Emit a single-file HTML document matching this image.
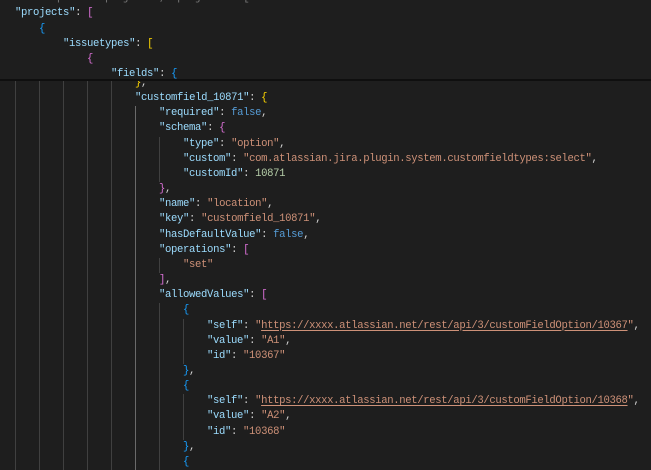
<!DOCTYPE html>
<html><head><meta charset="utf-8"><style>
html,body{margin:0;padding:0;background:#1e1e1e;width:651px;height:454px;overflow:hidden}
.ed{position:absolute;left:0;width:651px;font-family:"Liberation Mono",monospace;font-size:10.6px;letter-spacing:-0.35px;color:#d4d4d4}
.l{position:relative;height:15.17px;line-height:15.17px;white-space:pre}
.k{color:#9cdcfe}.s{color:#ce9178}.b{color:#569cd6}.n{color:#b5cea8}
.y{color:#ffd700}.p{color:#da70d6}.c{color:#179fff}
.u{text-decoration:underline;text-decoration-color:#ce9178;text-underline-offset:2px}
.g{position:absolute;top:0;width:1px;height:15.17px;background:#404040}
.ga{background:#6a6a6a}
#hdr{top:0;height:79px;background:#1e1e1e;z-index:2;overflow:hidden}
#sep{position:absolute;top:79px;left:0;width:651px;height:2px;background:#0f0f0f;z-index:3}
#body{top:76px;z-index:1}
</style></head><body>
<div class="ed" id="hdr"><div style="position:absolute;top:-8.8px;left:0;width:651px"><div class="l" style="padding-left:15px;color:#777">    "expand": "projects", "projects": [ ...</div><div class="l" style="padding-left:15px"><span class="k">"projects"</span>: <span class="p">[</span></div><div class="l" style="padding-left:39px"><span class="c">{</span></div><div class="l" style="padding-left:63px"><span class="k">"issuetypes"</span>: <span class="y">[</span></div><div class="l" style="padding-left:87px"><span class="p">{</span></div><div class="l" style="padding-left:111px"><span class="k">"fields"</span>: <span class="c">{</span></div></div></div>
<div id="sep"></div>
<div class="ed" id="body">
<div class="l" style="padding-left:135px"><i class="g" style="left:15px"></i><i class="g" style="left:39px"></i><i class="g" style="left:63px"></i><i class="g" style="left:87px"></i><i class="g" style="left:111px"></i><span class="y">}</span>,</div>
<div class="l" style="padding-left:135px"><i class="g" style="left:15px"></i><i class="g" style="left:39px"></i><i class="g" style="left:63px"></i><i class="g" style="left:87px"></i><i class="g" style="left:111px"></i><span class="k">"customfield_10871"</span>: <span class="y">{</span></div>
<div class="l" style="padding-left:159px"><i class="g" style="left:15px"></i><i class="g" style="left:39px"></i><i class="g" style="left:63px"></i><i class="g" style="left:87px"></i><i class="g" style="left:111px"></i><i class="g ga" style="left:135px"></i><span class="k">"required"</span>: <span class="b">false</span>,</div>
<div class="l" style="padding-left:159px"><i class="g" style="left:15px"></i><i class="g" style="left:39px"></i><i class="g" style="left:63px"></i><i class="g" style="left:87px"></i><i class="g" style="left:111px"></i><i class="g ga" style="left:135px"></i><span class="k">"schema"</span>: <span class="p">{</span></div>
<div class="l" style="padding-left:183px"><i class="g" style="left:15px"></i><i class="g" style="left:39px"></i><i class="g" style="left:63px"></i><i class="g" style="left:87px"></i><i class="g" style="left:111px"></i><i class="g ga" style="left:135px"></i><i class="g" style="left:159px"></i><span class="k">"type"</span>: <span class="s">"option"</span>,</div>
<div class="l" style="padding-left:183px"><i class="g" style="left:15px"></i><i class="g" style="left:39px"></i><i class="g" style="left:63px"></i><i class="g" style="left:87px"></i><i class="g" style="left:111px"></i><i class="g ga" style="left:135px"></i><i class="g" style="left:159px"></i><span class="k">"custom"</span>: <span class="s">"com.atlassian.jira.plugin.system.customfieldtypes:select"</span>,</div>
<div class="l" style="padding-left:183px"><i class="g" style="left:15px"></i><i class="g" style="left:39px"></i><i class="g" style="left:63px"></i><i class="g" style="left:87px"></i><i class="g" style="left:111px"></i><i class="g ga" style="left:135px"></i><i class="g" style="left:159px"></i><span class="k">"customId"</span>: <span class="n">10871</span></div>
<div class="l" style="padding-left:159px"><i class="g" style="left:15px"></i><i class="g" style="left:39px"></i><i class="g" style="left:63px"></i><i class="g" style="left:87px"></i><i class="g" style="left:111px"></i><i class="g ga" style="left:135px"></i><span class="p">}</span>,</div>
<div class="l" style="padding-left:159px"><i class="g" style="left:15px"></i><i class="g" style="left:39px"></i><i class="g" style="left:63px"></i><i class="g" style="left:87px"></i><i class="g" style="left:111px"></i><i class="g ga" style="left:135px"></i><span class="k">"name"</span>: <span class="s">"location"</span>,</div>
<div class="l" style="padding-left:159px"><i class="g" style="left:15px"></i><i class="g" style="left:39px"></i><i class="g" style="left:63px"></i><i class="g" style="left:87px"></i><i class="g" style="left:111px"></i><i class="g ga" style="left:135px"></i><span class="k">"key"</span>: <span class="s">"customfield_10871"</span>,</div>
<div class="l" style="padding-left:159px"><i class="g" style="left:15px"></i><i class="g" style="left:39px"></i><i class="g" style="left:63px"></i><i class="g" style="left:87px"></i><i class="g" style="left:111px"></i><i class="g ga" style="left:135px"></i><span class="k">"hasDefaultValue"</span>: <span class="b">false</span>,</div>
<div class="l" style="padding-left:159px"><i class="g" style="left:15px"></i><i class="g" style="left:39px"></i><i class="g" style="left:63px"></i><i class="g" style="left:87px"></i><i class="g" style="left:111px"></i><i class="g ga" style="left:135px"></i><span class="k">"operations"</span>: <span class="p">[</span></div>
<div class="l" style="padding-left:183px"><i class="g" style="left:15px"></i><i class="g" style="left:39px"></i><i class="g" style="left:63px"></i><i class="g" style="left:87px"></i><i class="g" style="left:111px"></i><i class="g ga" style="left:135px"></i><i class="g" style="left:159px"></i><span class="s">"set"</span></div>
<div class="l" style="padding-left:159px"><i class="g" style="left:15px"></i><i class="g" style="left:39px"></i><i class="g" style="left:63px"></i><i class="g" style="left:87px"></i><i class="g" style="left:111px"></i><i class="g ga" style="left:135px"></i><span class="p">]</span>,</div>
<div class="l" style="padding-left:159px"><i class="g" style="left:15px"></i><i class="g" style="left:39px"></i><i class="g" style="left:63px"></i><i class="g" style="left:87px"></i><i class="g" style="left:111px"></i><i class="g ga" style="left:135px"></i><span class="k">"allowedValues"</span>: <span class="p">[</span></div>
<div class="l" style="padding-left:183px"><i class="g" style="left:15px"></i><i class="g" style="left:39px"></i><i class="g" style="left:63px"></i><i class="g" style="left:87px"></i><i class="g" style="left:111px"></i><i class="g ga" style="left:135px"></i><i class="g" style="left:159px"></i><span class="c">{</span></div>
<div class="l" style="padding-left:207px"><i class="g" style="left:15px"></i><i class="g" style="left:39px"></i><i class="g" style="left:63px"></i><i class="g" style="left:87px"></i><i class="g" style="left:111px"></i><i class="g ga" style="left:135px"></i><i class="g" style="left:159px"></i><i class="g" style="left:183px"></i><span class="k">"self"</span>: <span class="s">"<span class="u">https://xxxx.atlassian.net/rest/api/3/customFieldOption/10367</span>"</span>,</div>
<div class="l" style="padding-left:207px"><i class="g" style="left:15px"></i><i class="g" style="left:39px"></i><i class="g" style="left:63px"></i><i class="g" style="left:87px"></i><i class="g" style="left:111px"></i><i class="g ga" style="left:135px"></i><i class="g" style="left:159px"></i><i class="g" style="left:183px"></i><span class="k">"value"</span>: <span class="s">"A1"</span>,</div>
<div class="l" style="padding-left:207px"><i class="g" style="left:15px"></i><i class="g" style="left:39px"></i><i class="g" style="left:63px"></i><i class="g" style="left:87px"></i><i class="g" style="left:111px"></i><i class="g ga" style="left:135px"></i><i class="g" style="left:159px"></i><i class="g" style="left:183px"></i><span class="k">"id"</span>: <span class="s">"10367"</span></div>
<div class="l" style="padding-left:183px"><i class="g" style="left:15px"></i><i class="g" style="left:39px"></i><i class="g" style="left:63px"></i><i class="g" style="left:87px"></i><i class="g" style="left:111px"></i><i class="g ga" style="left:135px"></i><i class="g" style="left:159px"></i><span class="c">}</span>,</div>
<div class="l" style="padding-left:183px"><i class="g" style="left:15px"></i><i class="g" style="left:39px"></i><i class="g" style="left:63px"></i><i class="g" style="left:87px"></i><i class="g" style="left:111px"></i><i class="g ga" style="left:135px"></i><i class="g" style="left:159px"></i><span class="c">{</span></div>
<div class="l" style="padding-left:207px"><i class="g" style="left:15px"></i><i class="g" style="left:39px"></i><i class="g" style="left:63px"></i><i class="g" style="left:87px"></i><i class="g" style="left:111px"></i><i class="g ga" style="left:135px"></i><i class="g" style="left:159px"></i><i class="g" style="left:183px"></i><span class="k">"self"</span>: <span class="s">"<span class="u">https://xxxx.atlassian.net/rest/api/3/customFieldOption/10368</span>"</span>,</div>
<div class="l" style="padding-left:207px"><i class="g" style="left:15px"></i><i class="g" style="left:39px"></i><i class="g" style="left:63px"></i><i class="g" style="left:87px"></i><i class="g" style="left:111px"></i><i class="g ga" style="left:135px"></i><i class="g" style="left:159px"></i><i class="g" style="left:183px"></i><span class="k">"value"</span>: <span class="s">"A2"</span>,</div>
<div class="l" style="padding-left:207px"><i class="g" style="left:15px"></i><i class="g" style="left:39px"></i><i class="g" style="left:63px"></i><i class="g" style="left:87px"></i><i class="g" style="left:111px"></i><i class="g ga" style="left:135px"></i><i class="g" style="left:159px"></i><i class="g" style="left:183px"></i><span class="k">"id"</span>: <span class="s">"10368"</span></div>
<div class="l" style="padding-left:183px"><i class="g" style="left:15px"></i><i class="g" style="left:39px"></i><i class="g" style="left:63px"></i><i class="g" style="left:87px"></i><i class="g" style="left:111px"></i><i class="g ga" style="left:135px"></i><i class="g" style="left:159px"></i><span class="c">}</span>,</div>
<div class="l" style="padding-left:183px"><i class="g" style="left:15px"></i><i class="g" style="left:39px"></i><i class="g" style="left:63px"></i><i class="g" style="left:87px"></i><i class="g" style="left:111px"></i><i class="g ga" style="left:135px"></i><i class="g" style="left:159px"></i><span class="c">{</span></div>
</div>
</body></html>
